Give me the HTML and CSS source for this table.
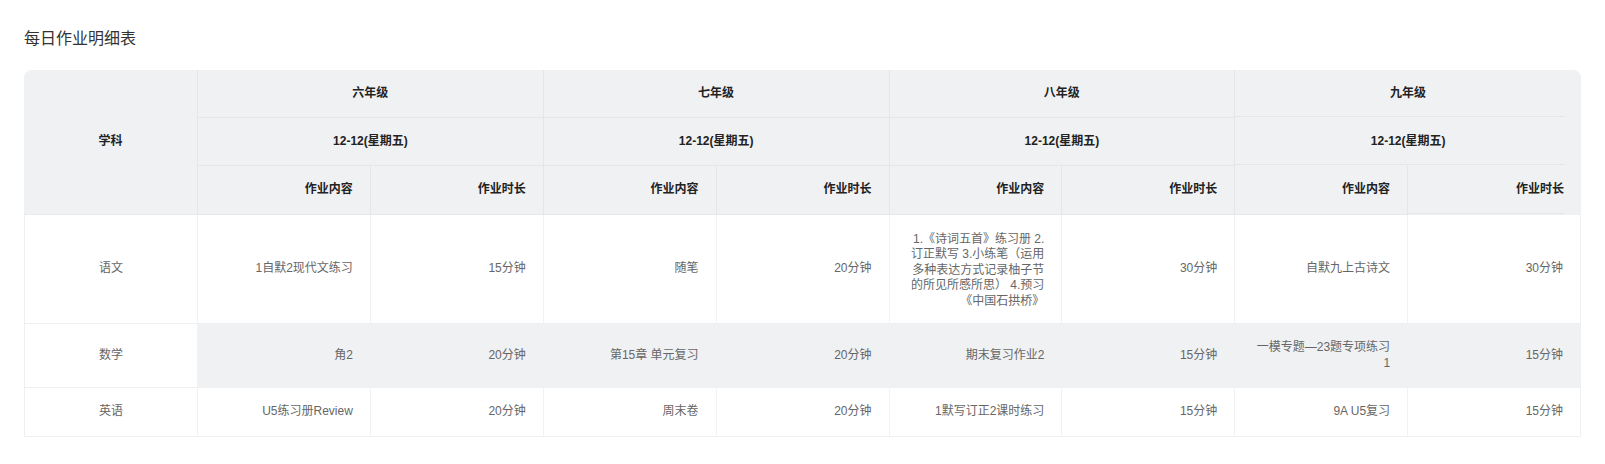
FILE: index.html
```html
<!DOCTYPE html>
<html lang="zh">
<head>
<meta charset="utf-8">
<title>每日作业明细表</title>
<link rel="stylesheet" href="styles.css">
</head>
<body>
<div class="page">
  <h1 class="title">每日作业明细表</h1>
  <div class="table-wrap">
    <table class="grid">
      <colgroup>
        <col class="col-subject">
        <col><col><col><col><col><col><col><col>
      </colgroup>
      <thead>
        <tr class="hr1">
          <th class="subject-head" rowspan="3">学科</th>
          <th colspan="2" class="center">六年级</th>
          <th colspan="2" class="center">七年级</th>
          <th colspan="2" class="center">八年级</th>
          <th colspan="2" class="center edge">九年级</th>
        </tr>
        <tr class="hr2">
          <th colspan="2" class="center">12-12(星期五)</th>
          <th colspan="2" class="center">12-12(星期五)</th>
          <th colspan="2" class="center">12-12(星期五)</th>
          <th colspan="2" class="center edge">12-12(星期五)</th>
        </tr>
        <tr class="hr3">
          <th>作业内容</th><th>作业时长</th>
          <th>作业内容</th><th>作业时长</th>
          <th>作业内容</th><th>作业时长</th>
          <th>作业内容</th><th class="edge">作业时长</th>
        </tr>
      </thead>
      <tbody>
        <tr class="r-tall">
          <td class="subject">语文</td>
          <td>1自默2现代文练习</td><td>15分钟</td>
          <td>随笔</td><td>20分钟</td>
          <td class="long">1.《诗词五首》练习册 2.<br>订正默写 3.小练笔（运用<br>多种表达方式记录柚子节<br>的所见所感所思） 4.预习<br>《中国石拱桥》</td><td>30分钟</td>
          <td>自默九上古诗文</td><td class="last">30分钟</td>
        </tr>
        <tr class="r-mid hover">
          <td class="subject">数学</td>
          <td>角2</td><td>20分钟</td>
          <td>第15章 单元复习</td><td>20分钟</td>
          <td>期末复习作业2</td><td>15分钟</td>
          <td>一模专题—23题专项练习<br>1</td><td class="last">15分钟</td>
        </tr>
        <tr class="r-short">
          <td class="subject">英语</td>
          <td>U5练习册Review</td><td>20分钟</td>
          <td>周末卷</td><td>20分钟</td>
          <td>1默写订正2课时练习</td><td>15分钟</td>
          <td>9A U5复习</td><td class="last">15分钟</td>
        </tr>
      </tbody>
    </table>
  </div>
</div>
</body>
</html>
```

FILE: styles.css
```css
html, body {
  margin: 0;
  padding: 0;
  background: #ffffff;
}

.page {
  padding: 25px 24px 0 24px;
  font-family: "Liberation Sans", "Noto Sans CJK SC", sans-serif;
}

.title {
  margin: 0 0 17px 0;
  font-size: 16px;
  line-height: 28px;
  font-weight: normal;
  color: #333333;
}

.table-wrap {
  width: 1557px;
  border-radius: 8px 8px 0 0;
  overflow: hidden;
}

.grid {
  width: 1557px;
  table-layout: fixed;
  border-collapse: separate;
  border-spacing: 0;
  font-size: 12px;
  line-height: 15.4px;
}

.col-subject {
  width: 174px;
}

.grid th {
  background: #f0f1f3;
  color: #222222;
  font-weight: bold;
  text-align: right;
  padding: 0 17px;
  border-right: 1px solid #e4e6e9;
  border-bottom: 1px solid #e4e6e9;
  vertical-align: middle;
  box-sizing: border-box;
}

.grid th.center {
  text-align: center;
}

.grid th.subject-head {
  text-align: center;
  border-bottom: 1px solid #e8eaed;
}

.grid th.edge {
  border-right: none;
  border-bottom-color: transparent;
  background-image: linear-gradient(#e4e6e9, #e4e6e9);
  background-size: calc(100% - 16px) 1px;
  background-position: left bottom;
  background-repeat: no-repeat;
}

.hr1 { height: 48px; }
.hr2 { height: 48px; }
.hr3 { height: 49px; }

.grid td {
  color: #666666;
  text-align: right;
  padding: 0 17px;
  border-right: 1px solid #f1f2f4;
  border-bottom: 1px solid #eeeff1;
  vertical-align: middle;
  background: #ffffff;
  box-sizing: border-box;
}

.grid td.long {
  padding-top: 3px;
}

.grid td.subject {
  text-align: center;
  border-left: 1px solid #eeeff1;
}

.grid td.last {
  border-right: 1px solid #eeeff1;
}

.grid tr.hover td {
  background: #f0f1f3;
}

.grid tr.hover td.subject {
  background: #ffffff;
}

.r-tall { height: 109px; }
.r-mid { height: 64px; }
.r-short { height: 49px; }
```
